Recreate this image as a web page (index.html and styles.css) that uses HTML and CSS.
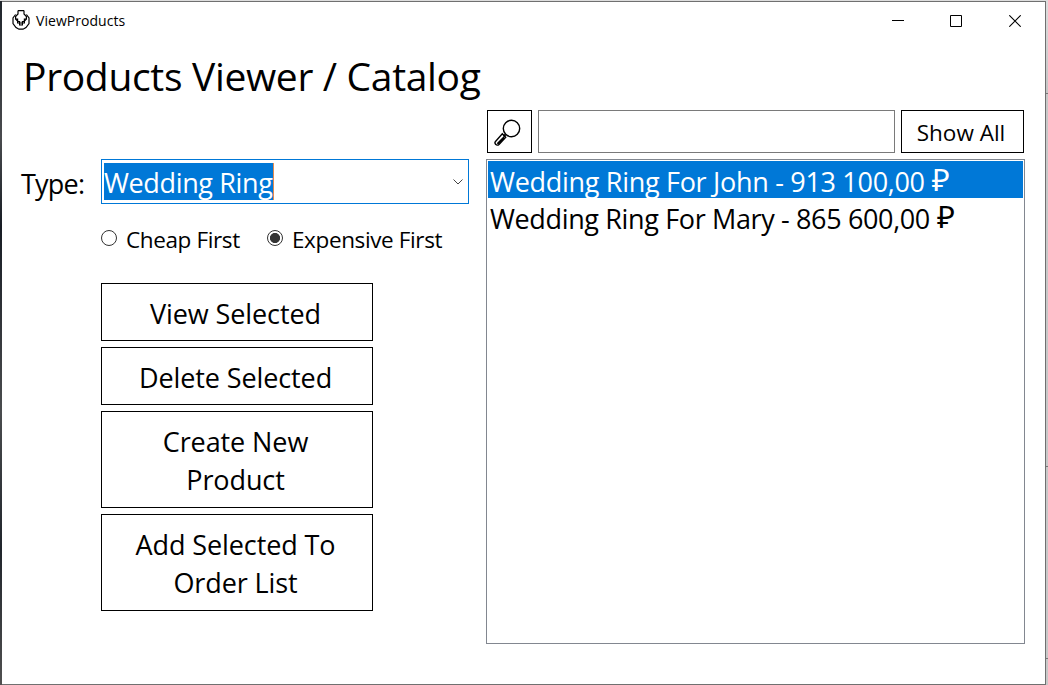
FILE: index.html
```html
<!DOCTYPE html>
<html lang="en">
<head>
<meta charset="utf-8">
<title>ViewProducts</title>
<link rel="stylesheet" href="styles.css">
</head>
<body>
<div class="desktop">
  <div class="behind-left"></div>
  <main class="window">
    <header class="titlebar">
      <svg class="app-icon" width="18" height="20" viewBox="0 0 18 20" fill="none" stroke="#000" stroke-width="1.2">
        <path d="M6 .6h6M6 .6v3.400L3.600 6.500v2.500L6 11.500M12 .6v3.400l2.400 2.500v2.500L12 11.500"/>
        <path d="M3.600 4.500L1 8v5.500l3 4L7 19.200h4l3-1.700 3-4V8l-2.600-3.500"/>
        <path d="M3.600 9h2v2.500h2V13h2.800v-1.500h2V9h2M5.600 11.500V13h2v2h2.800v-2h2v-1.500"/>
      </svg>
      <span class="app-name">ViewProducts</span>
      <div class="controls">
        <svg width="12" height="12" viewBox="0 0 12 12"><path d="M0 5.500h12" stroke="#000"/></svg>
        <svg width="12" height="12" viewBox="0 0 12 12"><path d="M.5.5h11v11H.5z" stroke="#000" fill="none"/></svg>
        <svg width="12" height="12" viewBox="0 0 12 12"><path d="M.3.3l11.400 11.400M11.700.3L.3 11.700" stroke="#000" stroke-width="1.1"/></svg>
      </div>
    </header>
    <h1 class="heading"><span>Products Viewer / Catalog</span></h1>
    <div class="content">
      <section class="filters">
        <div class="type-row">
          <span class="type-label">Type:</span>
          <div class="combo">
            <span class="combo-value">Wedding Ring</span>
            <svg width="10" height="6" viewBox="0 0 10 6"><path d="M.5.5L5 5 9.500.5" fill="none" stroke="#444"/></svg>
          </div>
        </div>
        <div class="sort-row">
          <span class="radio"></span><span class="cheap">Cheap First</span>
          <span class="radio checked"></span><span class="expensive">Expensive First</span>
        </div>
        <div class="actions">
          <button class="action"><span>View Selected</span></button>
          <button class="action"><span>Delete Selected</span></button>
          <button class="action tall"><span>Create New<br>Product</span></button>
          <button class="action tall"><span>Add Selected To<br>Order List</span></button>
        </div>
      </section>
      <section class="results">
        <div class="search-row">
          <button class="search-button" aria-label="Search">
            <svg width="27" height="27" viewBox="0 0 27 27" fill="none" stroke="#000">
              <circle cx="17.500" cy="9.500" r="8.200" stroke-width="1.400"/>
              <path d="M11.500 15.500L9.500 17.500" stroke-width="2"/>
              <path d="M8.300 14.800l3.400 3.400-6.700 7.200c-1 1-2.500.9-3.300 0-.9-.9-.9-2.200 0-3.200z" stroke-width="1.400"/>
              <path d="M10.200 18.200L3.500 25" stroke-width="2.200"/>
            </svg>
          </button>
          <input class="search-input" aria-label="Search products">
          <button class="show-all"><span>Show All</span></button>
        </div>
        <div class="list">
          <div class="item selected"><span>Wedding Ring For John - 913 100,00</span><span class="ruble">₽</span></div>
          <div class="item"><span class="t-mary">Wedding Ring For Mary - 865 600,00</span><span class="ruble">₽</span></div>
        </div>
      </section>
    </div>
  </main>
  <div class="behind-right"><i class="seg-a"></i><i class="seg-b"></i><i class="seg-c"></i></div>
</div>
</body>
</html>
```
FILE: styles.css
```css
* { box-sizing: border-box; }
body { margin: 0; width: 1048px; height: 685px; overflow: hidden; background: #ddd; color: #000; font-family: "Open Sans", "Noto Sans", sans-serif; }
button { font-family: inherit; color: #000; background: #fff; border: 1px solid #000; border-radius: 0; padding: 0; display: flex; align-items: center; justify-content: center; text-align: center; }
span { white-space: nowrap; }
.desktop { display: flex; height: 685px; padding-top: 1px; }
.behind-left { width: 2px; background: linear-gradient(#20252c, #494b4e 20%, #171c24 33%, #4a4c4e 60%, #20252c 80%, #505050); }
.window { width: 1044px; height: 684px; background: #fff; border: solid #707070; border-width: 1px 1px 1px 0; }
.behind-right { width: 2px; display: flex; flex-direction: column; background: #c8c8c8; }
.seg-a { height: 93px; border-bottom: 1px solid #777; background: linear-gradient(#ddd, #c5c5c5); }
.seg-b { height: 373px; border-bottom: 1px solid #777; }
.seg-c { height: 192px; border-bottom: 1px solid #777; }
.titlebar { height: 38px; display: flex; align-items: center; padding-left: 10px; }
.app-icon { margin-top: -2px; }
.app-name { margin-left: 6px; font-size: 14px; line-height: 20px; letter-spacing: .05px; }
.controls { margin-left: auto; display: flex; gap: 47px; padding-right: 24px; }
.controls svg { display: block; }
.controls svg:first-child { margin-right: -1px; }
.heading { margin: 0; height: 68px; padding: 10px 0 0 21px; font-size: 39px; line-height: 52px; font-weight: 400; letter-spacing: -.33px; }
.content { display: flex; }
.filters { width: 484px; padding-top: 51px; }
.type-row { display: flex; height: 45px; align-items: center; padding-left: 19px; font-size: 27px; line-height: 38px; letter-spacing: -.36px; }
.type-label { width: 80px; padding-top: 4px; letter-spacing: -.8px; }
.combo { width: 368px; height: 45px; border: 1px solid #0078d7; padding: 0 5px 0 2px; display: flex; align-items: center; justify-content: space-between; }
.combo-value { background: #0078d7; color: #fff; height: 37px; width: 170px; line-height: 39px; border-right: 1px solid #e38b4e; margin-bottom: 1px; }
.sort-row { display: flex; align-items: center; height: 34px; margin-top: 17px; padding-left: 99px; font-size: 22.500px; line-height: 34px; letter-spacing: -.38px; }
.radio { width: 16px; height: 16px; border: 1px solid #333; border-radius: 50%; margin-top: -1px; }
.checked { background: radial-gradient(circle, #333 0 4.700px, #fff 5.400px); }
.cheap { width: 141px; margin-left: 9px; padding-top: 3px; }
.expensive { margin-left: 9px; padding-top: 3px; }
.actions { margin: 28px 0 0 99px; width: 272px; display: grid; gap: 6px; }
.action { height: 58px; font-size: 27px; line-height: 38px; letter-spacing: -.1px; padding: 4px 3px 0 0; }
.tall { height: 97px; padding-top: 3px; }
.results { width: 539px; padding-top: 2px; }
.search-row { display: flex; gap: 6px; padding: 0 1px; }
.search-button { width: 45px; height: 43px; padding: 2px 4px 0 0; }
.search-input { width: 357px; height: 43px; border: 1px solid #7a7a7a; padding: 0; outline: 0; }
.show-all { width: 123px; height: 43px; font-size: 22.500px; padding: 2px 3px 0 0; }
.list { height: 485px; margin-top: 6px; padding: 1px; border: 1px solid #828790; }
.item { height: 37px; padding-left: 2px; display: flex; font-size: 27px; line-height: 41px; letter-spacing: -.3px; }
.t-mary { letter-spacing: -.36px; }
.selected { background: #0078d7; color: #fff; }
.ruble { margin-left: 7px; font-family: "Noto Sans", sans-serif; font-size: 31px; line-height: 36px; }
```
